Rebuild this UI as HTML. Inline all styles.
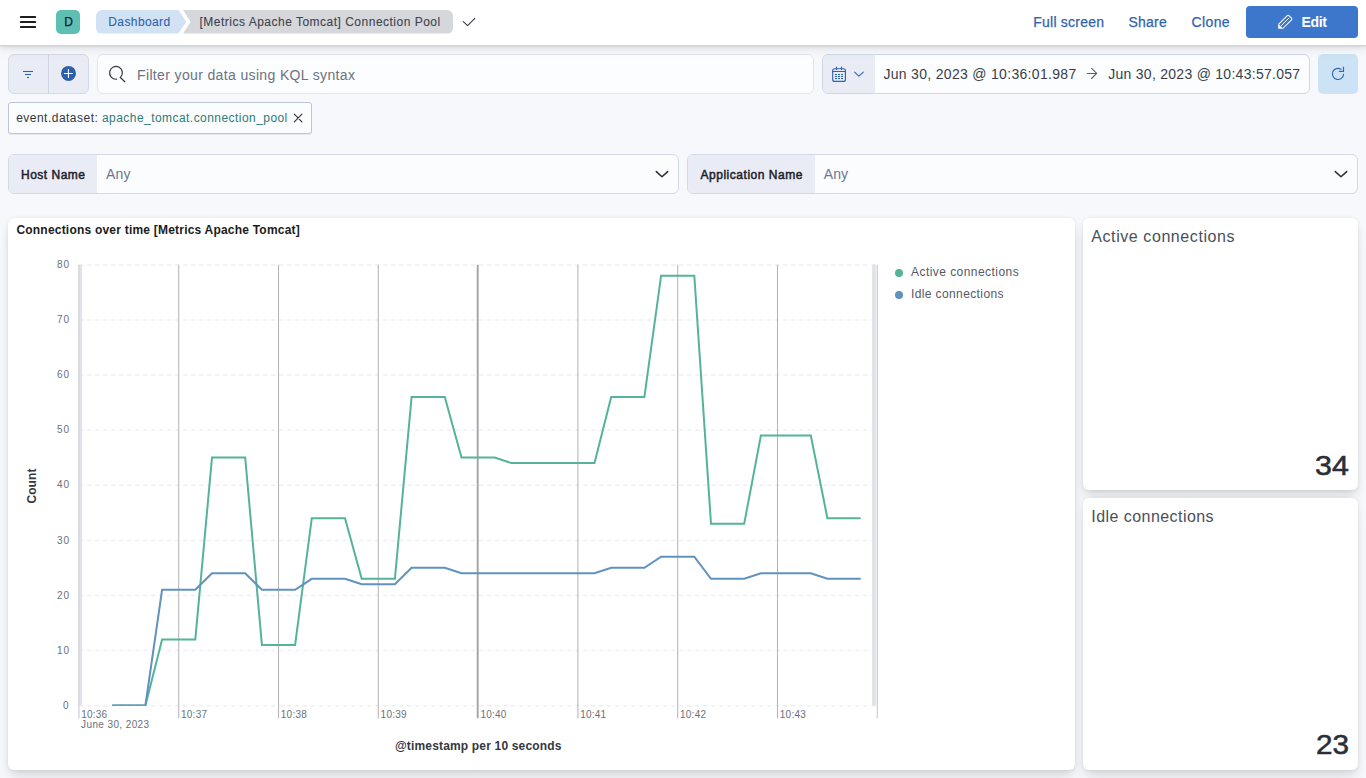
<!DOCTYPE html>
<html lang="en">
<head>
<meta charset="utf-8">
<title>[Metrics Apache Tomcat] Connection Pool - Dashboard</title>
<style>
*{box-sizing:border-box}
html,body{margin:0;padding:0}
body{width:1366px;height:778px;overflow:hidden;position:relative;background:#F7F8FC;font-family:"Liberation Sans",Arial,sans-serif;color:#343741;-webkit-font-smoothing:antialiased}
.t{position:absolute;white-space:nowrap;display:block}
.med{-webkit-text-stroke:0.25px currentColor}
.med2{-webkit-text-stroke:0.1px currentColor}
.semi{-webkit-text-stroke:0.5px currentColor}
.rot{transform:translate(-50%,-50%) rotate(-90deg);transform-origin:50% 50%}
.abs{position:absolute}
header{position:absolute;left:0;top:0;width:1366px;height:46px;background:#fff;border-bottom:1px solid #CFD5E2;box-shadow:0 .7px 1.4px rgba(0,0,0,.09),0 1.9px 4px rgba(0,0,0,.07),0 4.5px 10px rgba(0,0,0,.05);z-index:5}
.burger i{position:absolute;left:20px;width:16px;height:2px;background:#1D1E24;display:block;border-radius:.5px}
.avatar{left:56px;top:10px;width:24px;height:24px;border-radius:5px;background:#5EC0B3}
.bc1{left:96px;top:10.1px;width:90.4px;height:23.5px;background:#D2E2F5;border-radius:6px 0 0 6px;clip-path:polygon(0 0,calc(100% - 8px) 0,100% 50%,calc(100% - 8px) 100%,0 100%)}
.bc2{left:183px;top:10.1px;width:270.2px;height:23.5px;background:#D6D7DA;border-radius:0 6px 6px 0;clip-path:polygon(0 0,100% 0,100% 100%,0 100%,7.6px 50%)}
.editbtn{left:1246px;top:6px;width:112px;height:32px;border-radius:4px;background:#3C77CC}
.fgroup{left:8px;top:54px;width:81px;height:40px;border-radius:6px;background:#E9ECF4;border:1px solid #D3D9E8}
.fgroup b{position:absolute;left:38.7px;top:0;width:1px;height:38px;background:#CDD4E4;display:block}
.search{left:97px;top:54px;width:716.5px;height:39.6px;border-radius:6px;background:#FCFDFE;border:1px solid #E2E6F0}
.dates{left:822px;top:54px;width:488px;height:39.5px;border-radius:6px;background:#FCFDFE;border:1px solid #D0D7E7;overflow:hidden}
.dates b{position:absolute;left:0;top:0;width:52.4px;height:40px;background:#E9ECF4;display:block}
.refresh{left:1318px;top:54px;width:40px;height:40px;border-radius:5px;background:#CCE2F5}
.pill{left:8px;top:102px;width:303.7px;height:31.6px;border-radius:3px;background:#FBFCFE;border:1px solid #BCC5D5;box-shadow:0 1px 1px rgba(120,135,165,.15)}
.ctrl{top:154px;height:39.5px;border-radius:6px;background:#FBFCFE;border:1px solid #D3D9E8;overflow:hidden}
.ctrl b{position:absolute;left:0;top:0;height:40px;background:#E9ECF4;display:block}
.panel{background:#fff;border-radius:6px;box-shadow:0 .9px 4px -1px rgba(0,0,0,.08),0 2.6px 8px -1px rgba(0,0,0,.06),0 5.7px 12px -1px rgba(0,0,0,.05),0 15px 15px -1px rgba(0,0,0,.04)}
svg{position:absolute;display:block;overflow:visible}
svg.chart{left:8px;top:218px}
</style>
</head>
<body>

<header>
  <div class="burger"><i style="top:16px"></i><i style="top:21px"></i><i style="top:26px"></i></div>
  <div class="abs avatar"></div>
  <nav>
    <div class="abs bc1"></div>
    <div class="abs bc2"></div>
  </nav>
  <svg style="left:461px;top:15px" width="16" height="14" viewBox="461 15 16 14"><path d="M463.3 21.7 L467.6 25.7 L474.8 18.3" fill="none" stroke="#3A3D48" stroke-width="1.1" stroke-linecap="round" stroke-linejoin="round"/></svg>
  <div class="abs editbtn"></div>
  <svg style="left:1276px;top:13px" width="18" height="18" viewBox="1276 12.7 18 18"><path d="M1278.5 24.0 L1287.3 15.3 Q1288.1 14.6 1288.9 15.3 L1291.5 17.9 Q1292.2 18.7 1291.5 19.5 L1282.8 28.2" fill="none" stroke="#fff" stroke-width="1.05" stroke-linejoin="round" stroke-linecap="round"/><path d="M1278.4 24.0 V28.3 H1282.8 Z" fill="#fff" stroke="#fff" stroke-width=".4" stroke-linejoin="round"/><path d="M1281.3 25.3 L1288.9 17.8" fill="none" stroke="#fff" stroke-width=".95" stroke-linecap="round"/></svg>
    <span id="avD" class="t med" style="left:64.20px;top:14.04px;font-size:12px;line-height:16px;color:#0C1A2E;">D</span>
  <span id="bc1" class="t med2" style="left:108.30px;top:14.04px;font-size:12px;line-height:16px;color:#3063AD;letter-spacing:0.398px;">Dashboard</span>
  <span id="bc2" class="t med2" style="left:199.50px;top:14.04px;font-size:12px;line-height:16px;color:#3F4350;letter-spacing:0.495px;">[Metrics Apache Tomcat] Connection Pool</span>
  <span id="full" class="t med" style="left:1033.30px;top:13.05px;font-size:14px;line-height:18px;color:#3063AD;letter-spacing:0.223px;">Full screen</span>
  <span id="share" class="t med" style="left:1128.60px;top:13.05px;font-size:14px;line-height:18px;color:#3063AD;letter-spacing:0.182px;">Share</span>
  <span id="clone" class="t med" style="left:1191.60px;top:13.05px;font-size:14px;line-height:18px;color:#3063AD;letter-spacing:0.353px;">Clone</span>
  <span id="edit" class="t" style="left:1301.40px;top:13.05px;font-size:14px;line-height:18px;color:#FFFFFF;font-weight:700;letter-spacing:-0.319px;">Edit</span>
</header>

<section id="querybar">
  <div class="abs fgroup"><b></b></div>
  <svg style="left:22px;top:69px" width="12" height="10" viewBox="22 69 12 10"><g fill="#3063AD"><rect x="23" y="70.95" width="10" height="1.1"/><rect x="25" y="73.95" width="6" height="1.1"/><rect x="27" y="76.95" width="2" height="1.1"/></g></svg>
  <svg style="left:60px;top:65px" width="17" height="17" viewBox="60 65 17 17"><circle cx="68.5" cy="73.4" r="7.5" fill="#2D60AB"/><path d="M64 73.45 H73 M68.45 69 V78" stroke="#fff" stroke-width="1.15"/></svg>
  <div class="abs search"></div>
  <svg style="left:108px;top:65px" width="19" height="19" viewBox="108 65 19 19"><g fill="none" stroke="#343741" stroke-width="1.2" stroke-linecap="round" stroke-linejoin="round"><path d="M116.6 79.2 A6.4 6.4 0 1 1 120.3 77.56 L124.8 81.7"/></g></svg>
  <div class="abs dates"><b></b></div>
  <svg style="left:831px;top:66px" width="16" height="17" viewBox="831 66 16 17"><g fill="none" stroke="#3063AD" stroke-width="1.15" stroke-linecap="round" stroke-linejoin="round"><rect x="832.7" y="68.7" width="12.7" height="12.7" rx="2"/><path d="M832.7 71.5 H845.4"/><path d="M836.5 67.1 V69.6"/><path d="M841.5 67.1 V69.6"/></g><g fill="#3063AD"><rect x="835" y="74" width="2" height="1.05"/><rect x="838" y="74" width="2" height="1.05"/><rect x="841" y="74" width="2" height="1.05"/><rect x="835" y="76" width="2" height="1.05"/><rect x="838" y="76" width="2" height="1.05"/><rect x="841" y="76" width="2" height="1.05"/><rect x="835" y="78" width="2" height="1.05"/><rect x="838" y="78" width="2" height="1.05"/><rect x="841" y="78" width="2" height="1.05"/></g></svg>
  <svg style="left:853px;top:70px" width="12" height="8" viewBox="853 70 12 8"><path d="M854.6 72.2 L858.9 76.2 L863.3 72.2" fill="none" stroke="#3467B4" stroke-width="1.1" stroke-linecap="round" stroke-linejoin="round"/></svg>
  <svg style="left:1085px;top:66px" width="14" height="15" viewBox="1085 66 14 15"><path d="M1087.2 73.45 H1096.6 M1091.6 68.4 L1096.7 73.45 L1091.6 78.5" fill="none" stroke="#5A606C" stroke-width="1.1" stroke-linecap="round" stroke-linejoin="round"/></svg>
  <div class="abs refresh"></div>
  <svg style="left:1330px;top:66px" width="16" height="16" viewBox="1330 66 16 16"><g fill="none" stroke="#3467B4" stroke-width="1.15" stroke-linecap="round" stroke-linejoin="round"><path d="M1343.6 74.2 A5.6 5.6 0 1 1 1341 69.2"/><path d="M1343.5 67 V71.4 H1339.4"/></g></svg>
  <div class="abs pill"></div>
  <svg style="left:293px;top:113px" width="10" height="10" viewBox="293 113 10 10"><path d="M294.3 114.2 L301.9 121.8 M301.9 114.2 L294.3 121.8" stroke="#343741" stroke-width="1.2" stroke-linecap="round"/></svg>
    <span id="ph" class="t" style="left:137.00px;top:66.45px;font-size:14px;line-height:18px;color:#6C7380;letter-spacing:0.360px;">Filter your data using KQL syntax</span>
  <span id="d1" class="t" style="left:883.40px;top:65.45px;font-size:14px;line-height:18px;color:#3A3E4A;letter-spacing:0.312px;">Jun 30, 2023 @ 10:36:01.987</span>
  <span id="d2" class="t" style="left:1108.20px;top:65.45px;font-size:14px;line-height:18px;color:#3A3E4A;letter-spacing:0.277px;">Jun 30, 2023 @ 10:43:57.057</span>
  <span id="fk" class="t" style="left:16.20px;top:109.74px;font-size:12px;line-height:16px;color:#343741;letter-spacing:0.477px;">event.dataset:</span>
  <span id="fv" class="t" style="left:102.00px;top:109.74px;font-size:12px;line-height:16px;color:#2C7C76;letter-spacing:0.446px;">apache_tomcat.connection_pool</span>
</section>

<section id="controls">
  <div class="abs ctrl" style="left:8px;width:670.5px"><b style="width:87.7px"></b></div>
  <div class="abs ctrl" style="left:687px;width:671px"><b style="width:126.7px"></b></div>
  <svg style="left:654px;top:169px" width="16" height="10" viewBox="654 169 16 10"><path d="M656.3 171.6 L662 176.8 L667.7 171.6" fill="none" stroke="#2B2E38" stroke-width="1.5" stroke-linecap="round" stroke-linejoin="round"/></svg>
  <svg style="left:1333px;top:169px" width="16" height="10" viewBox="1333 169 16 10"><path d="M1335.3 171.6 L1341 176.8 L1346.7 171.6" fill="none" stroke="#2B2E38" stroke-width="1.5" stroke-linecap="round" stroke-linejoin="round"/></svg>
    <span id="c1l" class="t semi" style="left:21.00px;top:166.84px;font-size:12px;line-height:16px;color:#1F222B;letter-spacing:0.497px;">Host Name</span>
  <span id="c1v" class="t" style="left:106.00px;top:165.05px;font-size:14px;line-height:18px;color:#6C7691;letter-spacing:0.237px;">Any</span>
  <span id="c2l" class="t semi" style="left:700.50px;top:166.84px;font-size:12px;line-height:16px;color:#1F222B;letter-spacing:0.523px;">Application Name</span>
  <span id="c2v" class="t" style="left:823.80px;top:165.05px;font-size:14px;line-height:18px;color:#6C7691;letter-spacing:0.031px;">Any</span>
</section>

<main>
  <div class="abs panel" style="left:8px;top:218px;width:1067px;height:551.6px"></div>
  <div class="abs panel" style="left:1083px;top:218px;width:275px;height:271.6px"></div>
  <div class="abs panel" style="left:1083px;top:498px;width:275px;height:271.6px"></div>
<svg class="chart" width="1067" height="552" viewBox="8 218 1067 552">
<line x1="79.2" x2="877.3" y1="705.7" y2="705.7" stroke="#ECEEF5" stroke-width="1.5" stroke-dasharray="4 4"/>
<line x1="79.2" x2="877.3" y1="650.6" y2="650.6" stroke="#ECEEF5" stroke-width="1.5" stroke-dasharray="4 4"/>
<line x1="79.2" x2="877.3" y1="595.5" y2="595.5" stroke="#ECEEF5" stroke-width="1.5" stroke-dasharray="4 4"/>
<line x1="79.2" x2="877.3" y1="540.4" y2="540.4" stroke="#ECEEF5" stroke-width="1.5" stroke-dasharray="4 4"/>
<line x1="79.2" x2="877.3" y1="485.3" y2="485.3" stroke="#ECEEF5" stroke-width="1.5" stroke-dasharray="4 4"/>
<line x1="79.2" x2="877.3" y1="430.2" y2="430.2" stroke="#ECEEF5" stroke-width="1.5" stroke-dasharray="4 4"/>
<line x1="79.2" x2="877.3" y1="375.1" y2="375.1" stroke="#ECEEF5" stroke-width="1.5" stroke-dasharray="4 4"/>
<line x1="79.2" x2="877.3" y1="320.0" y2="320.0" stroke="#ECEEF5" stroke-width="1.5" stroke-dasharray="4 4"/>
<line x1="79.2" x2="877.3" y1="264.9" y2="264.9" stroke="#ECEEF5" stroke-width="1.5" stroke-dasharray="4 4"/>
<rect x="79.2" y="264.7" width="2.9" height="440.8" fill="#E1E3E8"/>
<rect x="872.1" y="264.7" width="4.0" height="440.8" fill="#E1E3E8"/>
<line x1="78.9" x2="78.9" y1="264.7" y2="718.2" stroke="#CBCDD3" stroke-width="1.2"/>
<line x1="178.7" x2="178.7" y1="264.7" y2="718.2" stroke="#B6B6B8" stroke-width="1.05"/>
<line x1="278.5" x2="278.5" y1="264.7" y2="718.2" stroke="#B6B6B8" stroke-width="1.05"/>
<line x1="378.3" x2="378.3" y1="264.7" y2="718.2" stroke="#B6B6B8" stroke-width="1.05"/>
<line x1="477.7" x2="477.7" y1="264.7" y2="718.2" stroke="#A2A3A6" stroke-width="1.9"/>
<line x1="577.9" x2="577.9" y1="264.7" y2="718.2" stroke="#B6B6B8" stroke-width="1.05"/>
<line x1="677.7" x2="677.7" y1="264.7" y2="718.2" stroke="#B6B6B8" stroke-width="1.05"/>
<line x1="777.5" x2="777.5" y1="264.7" y2="718.2" stroke="#B6B6B8" stroke-width="1.05"/>
<line x1="877.3" x2="877.3" y1="264.7" y2="718.2" stroke="#CBCDD3" stroke-width="1.2"/>
<defs><clipPath id="plotclip"><rect x="79" y="260" width="798" height="445.8"/></clipPath></defs>
<polyline fill="none" stroke="#54B399" stroke-width="2" stroke-linejoin="miter" stroke-linecap="butt" clip-path="url(#plotclip)" points="112.2,705.5 128.8,705.5 145.4,705.5 162.1,639.4 178.7,639.4 195.3,639.4 212.0,457.6 228.6,457.6 245.2,457.6 261.9,644.9 278.5,644.9 295.1,644.9 311.8,518.2 328.4,518.2 345.0,518.2 361.7,578.8 378.3,578.8 394.9,578.8 411.6,396.9 428.2,396.9 444.8,396.9 461.5,457.6 478.1,457.6 494.7,457.6 511.4,463.1 528.0,463.1 544.6,463.1 561.3,463.1 577.9,463.1 594.5,463.1 611.2,396.9 627.8,396.9 644.4,396.9 661.1,275.7 677.7,275.7 694.3,275.7 711.0,523.7 727.6,523.7 744.2,523.7 760.9,435.5 777.5,435.5 794.1,435.5 810.8,435.5 827.4,518.2 844.0,518.2 860.7,518.2"/>
<polyline fill="none" stroke="#6092C0" stroke-width="2" stroke-linejoin="miter" stroke-linecap="butt" clip-path="url(#plotclip)" points="112.2,705.5 128.8,705.5 145.4,705.5 162.1,589.8 178.7,589.8 195.3,589.8 212.0,573.3 228.6,573.3 245.2,573.3 261.9,589.8 278.5,589.8 295.1,589.8 311.8,578.8 328.4,578.8 345.0,578.8 361.7,584.3 378.3,584.3 394.9,584.3 411.6,567.8 428.2,567.8 444.8,567.8 461.5,573.3 478.1,573.3 494.7,573.3 511.4,573.3 528.0,573.3 544.6,573.3 561.3,573.3 577.9,573.3 594.5,573.3 611.2,567.8 627.8,567.8 644.4,567.8 661.1,556.7 677.7,556.7 694.3,556.7 711.0,578.8 727.6,578.8 744.2,578.8 760.9,573.3 777.5,573.3 794.1,573.3 810.8,573.3 827.4,578.8 844.0,578.8 860.7,578.8"/>
<circle cx="899.0" cy="273.0" r="4" fill="#54B399"/>
<circle cx="899.0" cy="295.0" r="4" fill="#6092C0"/>
</svg>
    <span id="y0" class="t" style="left:63.00px;top:698.83px;font-size:10px;line-height:13px;color:#6A717D;">0</span>
  <span id="y10" class="t" style="left:57.10px;top:643.73px;font-size:10px;line-height:13px;color:#6A717D;letter-spacing:0.772px;">10</span>
  <span id="y20" class="t" style="left:57.10px;top:588.63px;font-size:10px;line-height:13px;color:#6A717D;letter-spacing:0.772px;">20</span>
  <span id="y30" class="t" style="left:57.10px;top:533.53px;font-size:10px;line-height:13px;color:#6A717D;letter-spacing:0.772px;">30</span>
  <span id="y40" class="t" style="left:57.10px;top:478.44px;font-size:10px;line-height:13px;color:#6A717D;letter-spacing:0.772px;">40</span>
  <span id="y50" class="t" style="left:57.10px;top:423.34px;font-size:10px;line-height:13px;color:#6A717D;letter-spacing:0.772px;">50</span>
  <span id="y60" class="t" style="left:57.10px;top:368.24px;font-size:10px;line-height:13px;color:#6A717D;letter-spacing:0.772px;">60</span>
  <span id="y70" class="t" style="left:57.10px;top:313.14px;font-size:10px;line-height:13px;color:#6A717D;letter-spacing:0.772px;">70</span>
  <span id="y80" class="t" style="left:57.10px;top:258.04px;font-size:10px;line-height:13px;color:#6A717D;letter-spacing:0.772px;">80</span>
  <span id="x0" class="t" style="left:81.20px;top:707.83px;font-size:10px;line-height:13px;color:#6A717D;letter-spacing:0.242px;">10:36</span>
  <span id="x1" class="t" style="left:181.00px;top:707.83px;font-size:10px;line-height:13px;color:#6A717D;letter-spacing:0.242px;">10:37</span>
  <span id="x2" class="t" style="left:280.80px;top:707.83px;font-size:10px;line-height:13px;color:#6A717D;letter-spacing:0.242px;">10:38</span>
  <span id="x3" class="t" style="left:380.60px;top:707.83px;font-size:10px;line-height:13px;color:#6A717D;letter-spacing:0.242px;">10:39</span>
  <span id="x4" class="t" style="left:480.40px;top:707.83px;font-size:10px;line-height:13px;color:#6A717D;letter-spacing:0.242px;">10:40</span>
  <span id="x5" class="t" style="left:580.20px;top:707.83px;font-size:10px;line-height:13px;color:#6A717D;letter-spacing:0.242px;">10:41</span>
  <span id="x6" class="t" style="left:680.00px;top:707.83px;font-size:10px;line-height:13px;color:#6A717D;letter-spacing:0.242px;">10:42</span>
  <span id="x7" class="t" style="left:779.80px;top:707.83px;font-size:10px;line-height:13px;color:#6A717D;letter-spacing:0.242px;">10:43</span>
  <span id="xdate" class="t" style="left:81.10px;top:717.63px;font-size:10px;line-height:13px;color:#6A717D;letter-spacing:0.384px;">June 30, 2023</span>
  <span id="xtitle" class="t" style="left:394.90px;top:738.14px;font-size:12px;line-height:16px;color:#343741;font-weight:700;letter-spacing:0.173px;">@timestamp per 10 seconds</span>
  <span id="ptitle" class="t" style="left:16.40px;top:221.94px;font-size:12px;line-height:16px;color:#1A1C21;font-weight:700;letter-spacing:0.212px;">Connections over time [Metrics Apache Tomcat]</span>
  <span id="leg1" class="t" style="left:911.00px;top:263.64px;font-size:12px;line-height:16px;color:#535966;letter-spacing:0.449px;">Active connections</span>
  <span id="leg2" class="t" style="left:911.00px;top:285.64px;font-size:12px;line-height:16px;color:#535966;letter-spacing:0.385px;">Idle connections</span>
  <span id="ycount" class="t rot" style="left:32px;top:485.7px;font-size:12px;line-height:16px;font-weight:700;color:#343741;letter-spacing:0.110px">Count</span>
    <span id="m1t" class="t" style="left:1091.30px;top:226.36px;font-size:16px;line-height:21px;color:#4A4F5C;letter-spacing:0.576px;">Active connections</span>
  <span id="m1v" class="t" style="left:1315.00px;top:447.60px;font-size:28px;line-height:36px;color:#2B2E38;-webkit-text-stroke:0.55px #2B2E38;transform:scaleX(1.085);transform-origin:0 50%;">34</span>
  <span id="m2t" class="t" style="left:1091.30px;top:506.36px;font-size:16px;line-height:21px;color:#4A4F5C;letter-spacing:0.444px;">Idle connections</span>
  <span id="m2v" class="t" style="left:1316.00px;top:727.30px;font-size:28px;line-height:36px;color:#2B2E38;-webkit-text-stroke:0.55px #2B2E38;transform:scaleX(1.06);transform-origin:0 50%;">23</span>
</main>

</body>
</html>
